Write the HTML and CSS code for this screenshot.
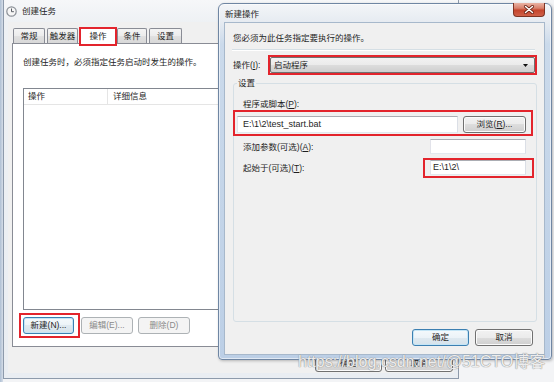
FILE: index.html
```html
<!DOCTYPE html>
<html lang="zh-CN">
<head>
<meta charset="utf-8">
<title>创建任务</title>
<link rel="stylesheet" href="styles.css">
</head>
<body>
<div class="desk">
  <section class="win win-task">
    <header class="tb tb-task">
      <svg class="tb-icon" width="11" height="11" viewBox="0 0 11 11"><circle cx="5.5" cy="5.5" r="4.7" fill="#f6f6f6" stroke="#8b9097" stroke-width="1.2"/><path d="M5.5 2.5V5.7H7.9" fill="none" stroke="#5b5f66" stroke-width="1"/></svg>
      <span class="tb-title">创建任务</span>
    </header>
    <div class="client client-task">
      <div class="tabs">
        <span class="tab t1">常规</span>
        <span class="tab t2">触发器</span>
        <span class="tab tab-on t3">操作<i class="mark mark-tab"></i></span>
        <span class="tab t4">条件</span>
        <span class="tab t5">设置</span>
      </div>
      <div class="panel">
        <p class="hint">创建任务时，必须指定任务启动时发生的操作。</p>
        <div class="list">
          <div class="list-head"><span class="col-a">操作</span><span class="col-b">详细信息</span></div>
        </div>
        <div class="panel-btns">
          <button class="btn btn-default w-new">新建(N)...<i class="mark mark-new"></i></button>
          <button class="btn w-edit" disabled>编辑(E)...</button>
          <button class="btn w-del" disabled>删除(D)</button>
        </div>
      </div>
      <div class="dlg-btns">
        <button class="btn w-ok">确定</button>
        <button class="btn w-cancel">取消</button>
      </div>
    </div>
  </section>

  <section class="win win-action">
    <header class="tb tb-action">
      <span class="tb-title">新建操作</span>
      <span class="close"><svg width="12" height="9" viewBox="0 0 12 9"><path d="M2.5 1.5 9.5 7.5M9.5 1.5 2.5 7.5" stroke="#6b2416" stroke-width="3" stroke-linecap="round"/><path d="M2.5 1.5 9.5 7.5M9.5 1.5 2.5 7.5" stroke="#fff" stroke-width="1.5" stroke-linecap="round"/></svg></span>
    </header>
    <div class="client client-action">
      <p class="a-hint">您必须为此任务指定要执行的操作。</p>
      <div class="a-sep"></div>
      <div class="a-row">
        <span class="a-label">操作(<u>I</u>):</span>
        <div class="combo">
          <span>启动程序</span>
          <svg class="combo-arrow" width="5" height="3" viewBox="0 0 5 3"><path d="M0 0H5L2.5 3Z" fill="#111"/></svg>
          <i class="mark mark-combo"></i>
        </div>
      </div>
      <fieldset class="grp">
        <legend class="grp-title">设置</legend>
        <div class="f-label">程序或脚本(<u>P</u>):</div>
        <div class="f-path">
          <span class="tbx tbx-path">E:\1\2\test_start.bat</span>
          <button class="btn w-browse">浏览(<u>R</u>)...</button>
          <i class="mark mark-path"></i>
        </div>
        <div class="f-row f-row2">
          <span class="f-row-label">添加参数(可选)(<u>A</u>):</span>
          <span class="tbx tbx-small"></span>
        </div>
        <div class="f-row f-row3">
          <span class="f-row-label">起始于(可选)(<u>T</u>):</span>
          <span class="tbx tbx-small">E:\1\2\<i class="mark mark-start"></i></span>
        </div>
      </fieldset>
      <div class="a-btns">
        <button class="btn btn-default w-aok">确定</button>
        <button class="btn w-acancel">取消</button>
      </div>
    </div>
  </section>

  <div class="watermark">https://blog.csdn.net/@51CTO博客</div>
</div>
</body>
</html>
```

FILE: styles.css
```css
* { box-sizing: border-box; }
html, body { margin: 0; padding: 0; }
body {
  width: 554px;
  height: 382px;
  overflow: hidden;
  font: 8.5px/16px "Liberation Sans", "Noto Sans CJK SC", sans-serif;
  color: #1e1e1e;
  background: #f1f2f4;
}
p { margin: 0; }
u { text-decoration: underline; text-underline-offset: 1px; }

.desk {
  position: relative;
  width: 554px;
  height: 382px;
  background: linear-gradient(90deg, #aebfd3 0, #d5dde8 3px, #f3f4f6 3px);
}

/* ---------- windows ---------- */
.win { position: absolute; display: flex; flex-direction: column; }

.win-task {
  left: 3px;
  top: 0;
  width: 456px;
  height: 379px;
  border: 1px solid #8d9aab;
  border-top: 0;
  padding: 0 4px 5px 4px;
  background: linear-gradient(#f6f7f9, #eef1f4 22px, #e9edf2);
}

.tb { display: flex; align-items: center; flex: none; }
.tb-task { height: 22px; margin-left: -2px; gap: 5px; }
.tb-icon { flex: none; }
.tb-title { color: #1e1e1e; }

.client { flex: 1; display: flex; flex-direction: column; background: #f0f0f0; min-height: 0; }
.client-task { padding: 5px 1px 0 4px; }

/* tabs */
.tabs { display: flex; align-items: flex-end; height: 16px; padding-left: 1px; flex: none; }
.tab {
  height: 15px;
  border: 1px solid #898c95;
  border-bottom: 0;
  border-radius: 2px 2px 0 0;
  background: linear-gradient(#f4f4f4, #ececec 50%, #e1e1e1 50%, #d8d8d8);
  text-align: center;
  line-height: 14px;
  flex: none;
}
.tab-on {
  height: 17px;
  margin-bottom: -1px;
  background: #fff;
  position: relative;
  z-index: 1;
  line-height: 16px;
}
.t1 { width: 32px; }
.t2 { width: 31px; margin-left: 2px; }
.t3 { width: 38px; margin-left: 1px; }
.t4 { width: 30px; }
.t5 { width: 33px; margin-left: 2px; }

.panel {
  flex: none;
  height: 304px;
  margin-right: 3px;
  border: 1px solid #898c95;
  background: #fff;
  padding: 10px 10px 0 10px;
}
.hint { line-height: 16px; }
.list {
  margin-top: 18px;
  height: 222px;
  border: 1px solid #828790;
  background: #fff;
}
.list-head { display: flex; height: 16px; border-bottom: 1px solid #e5e5e5; line-height: 15px; }
.col-a { width: 84px; padding-left: 4px; border-right: 1px solid #e5e5e5; }
.col-b { padding-left: 5px; }

.panel-btns { display: flex; margin-top: 7px; }

.btn {
  font: inherit;
  color: #1e1e1e;
  height: 17px;
  padding: 0;
  border: 1px solid #707070;
  border-radius: 3px;
  background: linear-gradient(#f2f2f2, #ebebeb 50%, #dddddd 50%, #cfcfcf);
  box-shadow: inset 0 0 0 1px #fbfbfb;
  line-height: 15px;
  text-align: center;
  position: relative;
  flex: none;
}
.btn:disabled {
  color: #8a8a8a;
  border-color: #adb2b5;
  background: #f4f4f4;
  box-shadow: none;
}
.btn-default {
  border-color: #3c7fb1;
  box-shadow: inset 0 0 0 1px #c4e5f6;
  background: linear-gradient(#f4f9fc, #ecf3f8 50%, #dfe9f0 50%, #d5e2eb);
}
.w-new { width: 51px; }
.w-edit { width: 52px; margin-left: 7px; }
.w-del { width: 52px; margin-left: 5px; }

.dlg-btns { display: flex; justify-content: flex-end; margin-top: 8px; }
.w-ok { width: 67px; }
.w-cancel { width: 68px; margin-left: 3px; }

/* ---------- right dialog ---------- */
.win-action {
  left: 218px;
  top: 3px;
  width: 334px;
  height: 357px;
  border: 1px solid #6f86a3;
  border-radius: 6px 6px 4px 4px;
  padding: 0 7px 5px 6px;
  background: linear-gradient(#f3f5f8 0, #e6ebf1 18px, #cbdaeb 40px, #bccfe6);
  box-shadow: inset 0 0 0 1px rgba(255, 255, 255, 0.55), 1px 1px 3px rgba(0, 0, 0, 0.25);
}
.tb-action { height: 19px; }
.close {
  margin-left: auto;
  margin-right: -1px;
  align-self: flex-start;
  margin-top: -1px;
  width: 32px;
  height: 14px;
  border: 1px solid #7e3322;
  border-top: 0;
  border-radius: 0 0 4px 4px;
  background: linear-gradient(#eab3a4, #d8806b 40%, #c5452c 55%, #cf6048);
  display: flex;
  align-items: center;
  justify-content: center;
}
.client-action {
  padding: 7px 9px 8px 8px;
  box-shadow: 0 0 0 1px #a7b8cb;
}
.a-hint { line-height: 16px; }
.a-sep {
  margin: 3px 0 0 -1px;
  border-top: 1px solid #d5dfe5;
  border-bottom: 1px solid #fff;
  flex: none;
}
.a-row { display: flex; align-items: center; margin-top: 6px; height: 16px; flex: none; }
.a-label { width: 37px; flex: none; }
.combo {
  flex: 1;
  height: 16px;
  position: relative;
  border: 1px solid #707070;
  border-radius: 2px;
  background: linear-gradient(#f2f2f2, #ebebeb 50%, #dddddd 50%, #cfcfcf);
  padding-left: 3px;
  line-height: 14px;
  display: flex;
  align-items: center;
}
.combo-arrow { margin-left: auto; margin-right: 6px; }

.grp {
  flex: 1;
  min-width: 0;
  margin: 2px -2px 0 0;
  border: 1px solid #d5dfe5;
  border-radius: 3px;
  padding: 0 3px;
}
.grp-title { padding: 0 1px; line-height: 16px; }
.f-label { margin-top: 5px; padding-left: 6px; line-height: 16px; }
.f-path {
  display: flex;
  margin-top: 4px;
  height: 17px;
  padding-right: 7px;
  position: relative;
}
.tbx {
  display: block;
  background: #fff;
  border: 1px solid #abadb3;
  border-color: #abadb3 #dbdfe6 #e3e9ef #e2e3ea;
  font-size: 9px;
  position: relative;
}
.tbx-path { width: 221px; height: 17px; padding-left: 5px; line-height: 15px; }
.w-browse { width: 63px; margin-left: auto; }
.f-row {
  display: flex;
  align-items: center;
  justify-content: space-between;
  height: 15px;
  margin-top: 6px;
  padding: 0 7px 0 6px;
}
.tbx-small { width: 96px; height: 15px; padding-left: 2px; line-height: 13px; }

.a-btns { display: flex; justify-content: flex-end; margin-top: 7px; padding-right: 2px; flex: none; }
.w-aok { width: 57px; }
.w-acancel { width: 58px; margin-left: 6px; }

/* ---------- red annotation boxes ---------- */
.mark {
  position: absolute;
  border: 2px solid #e3242c;
  pointer-events: none;
}
.mark-tab { top: -1px; left: -1px; right: -1px; bottom: -2px; }
.mark-new { top: -5px; left: -5px; right: -7px; bottom: -5px; }
.mark-combo { top: -3px; left: -3px; right: -3px; bottom: -3px; }
.mark-path { top: -6px; left: -4px; right: 0; bottom: -3px; }
.mark-start { top: -3px; left: -8px; right: -9px; bottom: -4px; }

/* ---------- watermark ---------- */
.watermark {
  position: absolute;
  left: 298px;
  top: 353px;
  font: 16px/18px "Liberation Sans", "Noto Sans CJK SC", sans-serif;
  color: rgba(255, 255, 255, 0.85);
  text-shadow: 0 0 1px #8a8a8a, 0 0 1px #8a8a8a;
  white-space: nowrap;
}
```
